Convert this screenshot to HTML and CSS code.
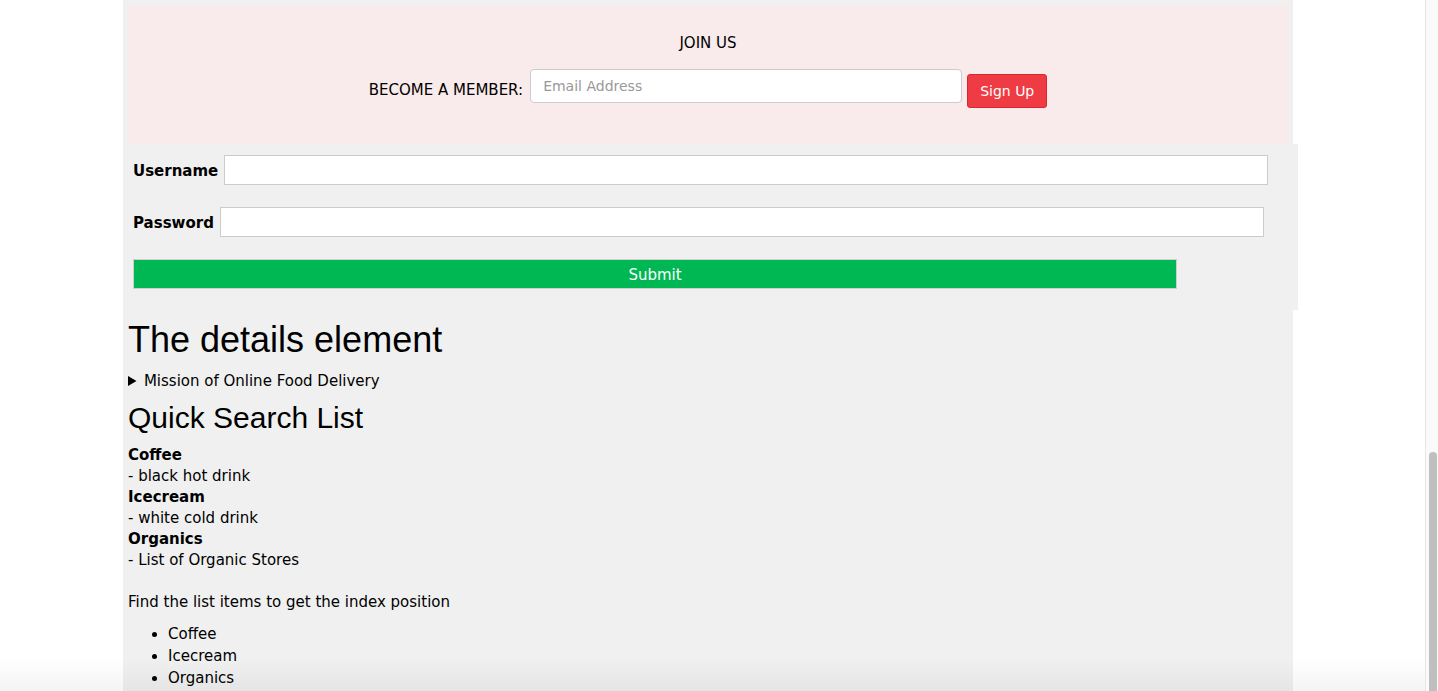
FILE: index.html
```html
<!DOCTYPE html>
<html lang="en">
<head>
<meta charset="utf-8">
<title>Online Food Delivery</title>
<link rel="stylesheet" href="styles.css">
</head>
<body>
<div class="container">
  <section class="join">
    <p class="join-title">JOIN US</p>
    <div class="join-row">
      <span class="join-label">BECOME A MEMBER:</span>
      <input class="join-input" type="email" placeholder="Email Address">
      <button class="join-btn" type="button">Sign Up</button>
    </div>
  </section>

  <form class="login">
    <div class="login-row">
      <label class="login-label" for="user">Username</label>
      <input class="login-input" id="user" type="text">
    </div>
    <div class="login-row">
      <label class="login-label" for="pass">Password</label>
      <input class="login-input" id="pass" type="password">
    </div>
    <button class="login-submit" type="button">Submit</button>
  </form>

  <h1 class="title">The details element</h1>
  <details class="mission">
    <summary>Mission of Online Food Delivery</summary>
  </details>

  <h2 class="subtitle">Quick Search List</h2>
  <dl class="quick">
    <dt>Coffee</dt>
    <dd>- black hot drink</dd>
    <dt>Icecream</dt>
    <dd>- white cold drink</dd>
    <dt>Organics</dt>
    <dd>- List of Organic Stores</dd>
  </dl>

  <p class="find">Find the list items to get the index position</p>
  <ul class="items">
    <li>Coffee</li>
    <li>Icecream</li>
    <li>Organics</li>
  </ul>
</div>

<div class="scrollbar"><div class="thumb"></div></div>
<div class="fade"></div>
</body>
</html>
```

FILE: styles.css
```css
html, body {
  margin: 0;
  padding: 0;
  height: 100%;
  overflow: hidden;
  background: #fff;
}

body {
  font-family: Verdana, "DejaVu Sans", sans-serif;
  font-size: 15px;
  line-height: 21px;
  color: #000;
}

.container {
  width: 1160px;
  margin-left: 123px;
  padding: 6px 5px 0 5px;
  background: #f0f0f0;
  min-height: 100%;
  box-sizing: content-box;
}

/* Join section */
.join {
  background: #f9eaeb;
  padding: 27px 0 36px;
  text-align: center;
}

.join-title {
  margin: 0 0 15px;
}

.join-row {
  display: flex;
  justify-content: center;
  align-items: flex-start;
}

.join-label {
  margin-top: 11px;
  margin-right: 7px;
}

.join-input {
  width: 432px;
  height: 34px;
  box-sizing: border-box;
  padding: 6px 12px;
  border: 1px solid #ccc;
  border-radius: 4px;
  background: #fff;
  font-family: inherit;
  font-size: 14px;
  color: #555;
  margin: 0 5px 0 0;
}

.join-input::placeholder {
  color: #999;
}

.join-btn {
  margin-top: 5px;
  height: 34px;
  box-sizing: border-box;
  padding: 0 12px;
  border: 1px solid #d9262f;
  border-radius: 3px;
  background: #ef3b43;
  color: #fff;
  font-family: inherit;
  font-size: 14px;
}

/* Login form */
.login {
  width: 1155px;
  margin: 0 0 0 -5px;
  padding: 11px 10px 21px;
  background: #f0f0f0;
  display: flex;
  flex-direction: column;
  gap: 22px;
}

.login-row {
  display: flex;
  align-items: center;
  gap: 6px;
}

.login-label {
  font-weight: bold;
  padding-top: 2px;
}

.login-input {
  width: 1044px;
  height: 30px;
  box-sizing: border-box;
  border: 1px solid #ccc;
  background: #fff;
  margin: 0;
  padding: 2px 6px;
}

.login-submit {
  width: 1044px;
  height: 30px;
  box-sizing: border-box;
  border: 1px solid #cfcfcf;
  background: #00b853;
  color: #fff;
  font-family: inherit;
  font-size: 15px;
  margin: 0;
  padding: 1px 0 0;
}

/* Headings & text */
.title {
  font-family: "Liberation Sans", Arial, sans-serif;
  font-weight: normal;
  font-size: 36px;
  line-height: 1.1;
  margin: 10px 0 11px;
}

.mission summary {
  cursor: pointer;
}

.subtitle {
  font-family: "Liberation Sans", Arial, sans-serif;
  font-weight: normal;
  font-size: 30px;
  line-height: 1.1;
  margin: 9px 0 11px;
}

.quick {
  margin: 0 0 21px;
}

.quick dt {
  font-weight: bold;
}

.quick dd {
  margin: 0;
}

.find {
  margin: 0 0 10px;
}

.items {
  margin: 0;
  padding-left: 40px;
  line-height: 22px;
}

/* Fake browser chrome overlays */
.scrollbar {
  position: fixed;
  top: 0;
  right: 0;
  width: 12px;
  height: 100%;
  background: #fafafa;
  border-left: 1px solid #e6e6e6;
}

.thumb {
  position: absolute;
  top: 452px;
  left: 3px;
  width: 8px;
  bottom: -10px;
  border-radius: 4px;
  background: #bfbfbf;
}

.fade {
  position: fixed;
  left: 0;
  right: 13px;
  bottom: 0;
  height: 32px;
  background: linear-gradient(to bottom, rgba(0,0,0,0), rgba(0,0,0,0.045));
  pointer-events: none;
}
```
